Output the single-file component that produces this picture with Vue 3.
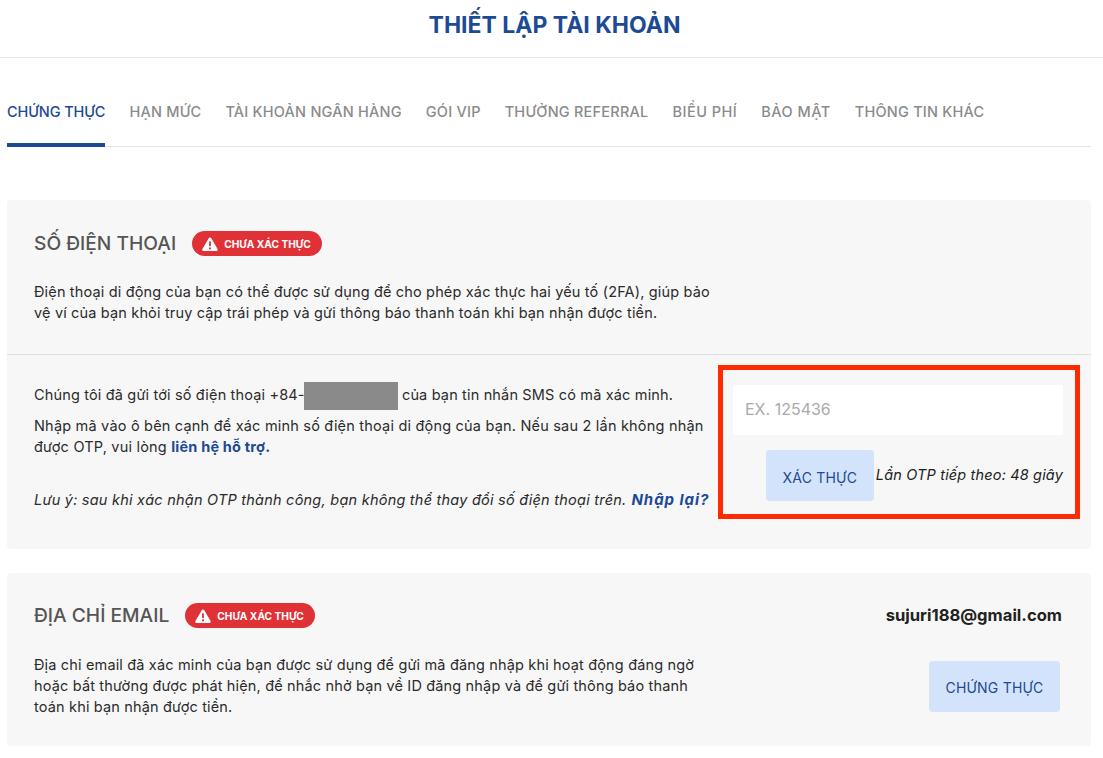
<template>
  <div class="page">
    <header class="top">
      <h1>THIẾT LẬP TÀI KHOẢN</h1>
    </header>

    <nav class="tabs">
      <a
          v-for="(tab, i) in tabs"
          :key="tab"
          class="tab"
          :class="{ active: i === 0 }"
      >{{ tab }}</a>
    </nav>

    <section class="card phone">
      <div class="card-head">
        <div class="title-row">
          <h2>SỐ ĐIỆN THOẠI</h2>
          <span class="badge">
            <svg width="16" height="14" viewBox="0 0 17 15">
              <path d="M8.5 0.5c.5 0 .9.3 1.2.7l6.9 11.7c.5.9-.1 2-1.2 2H1.6c-1.1 0-1.7-1.1-1.2-2L7.3 1.2c.3-.4.7-.7 1.2-.7z" fill="#fff" />
              <rect x="7.5" y="4.5" width="2" height="5.5" rx=".8" fill="#e03236" />
              <circle cx="8.5" cy="12.2" r="1.15" fill="#e03236" />
            </svg>
            CHƯA XÁC THỰC
          </span>
        </div>
        <p class="desc">
          Điện thoại di động của bạn có thể được sử dụng để cho phép xác thực hai yếu tố (2FA), giúp bảo<br>
          vệ ví của bạn khỏi truy cập trái phép và gửi thông báo thanh toán khi bạn nhận được tiền.
        </p>
      </div>

      <div class="verify">
        <div class="verify-text">
          <p class="sent">
            Chúng tôi đã gửi tới số điện thoại +84-<span class="masked"></span> của bạn tin nhắn SMS có mã xác minh.
          </p>
          <p class="enter">
            Nhập mã vào ô bên cạnh để xác minh số điện thoại di động của bạn. Nếu sau 2 lần không nhận<br>
            được OTP, vui lòng <a class="link">liên hệ hỗ trợ.</a>
          </p>
          <p class="note">
            <em>Lưu ý: sau khi xác nhận OTP thành công, bạn không thể thay đổi số điện thoại trên.</em>
            <a class="link again">Nhập lại?</a>
          </p>
        </div>

        <div class="otp-box">
          <input class="otp-input" type="text" placeholder="EX. 125436">
          <div class="otp-actions">
            <button class="btn otp-btn">XÁC THỰC</button>
            <em class="countdown">Lần OTP tiếp theo: {{ seconds }} giây</em>
          </div>
        </div>
      </div>
    </section>

    <section class="card email">
      <div class="email-text">
        <div class="title-row">
          <h2>ĐỊA CHỈ EMAIL</h2>
          <span class="badge">
            <svg width="16" height="14" viewBox="0 0 17 15">
              <path d="M8.5 0.5c.5 0 .9.3 1.2.7l6.9 11.7c.5.9-.1 2-1.2 2H1.6c-1.1 0-1.7-1.1-1.2-2L7.3 1.2c.3-.4.7-.7 1.2-.7z" fill="#fff" />
              <rect x="7.5" y="4.5" width="2" height="5.5" rx=".8" fill="#e03236" />
              <circle cx="8.5" cy="12.2" r="1.15" fill="#e03236" />
            </svg>
            CHƯA XÁC THỰC
          </span>
        </div>
        <p class="desc">
          Địa chỉ email đã xác minh của bạn được sử dụng để gửi mã đăng nhập khi hoạt động đáng ngờ<br>
          hoặc bất thường được phát hiện, để nhắc nhở bạn về ID đăng nhập và để gửi thông báo thanh<br>
          toán khi bạn nhận được tiền.
        </p>
      </div>
      <div class="email-side">
        <strong class="address">sujuri188@gmail.com</strong>
        <button class="btn email-btn">CHỨNG THỰC</button>
      </div>
    </section>
  </div>
</template>

<script setup>
import { ref } from 'vue';

const tabs = [
  'CHỨNG THỰC',
  'HẠN MỨC',
  'TÀI KHOẢN NGÂN HÀNG',
  'GÓI VIP',
  'THƯỞNG REFERRAL',
  'BIỂU PHÍ',
  'BẢO MẬT',
  'THÔNG TIN KHÁC'
];

const seconds = ref(48);
</script>

<style>
html,
body {
  margin: 0;
  background: #fff;
}
</style>

<style scoped>
.page {
  width: 1103px;
  height: 758px;
  overflow: hidden;
  font-family: Inter, "Noto Sans", sans-serif;
  color: #222;
}

.top {
  height: 50px;
  padding: 0 0 7px 6px;
  border-bottom: 1px solid #e3e3e3;
  display: flex;
  justify-content: center;
  align-items: center;
}

.top h1 {
  margin: 0;
  font-size: 23px;
  font-weight: 700;
  color: #1d4a94;
}

.tabs {
  margin: 0 12px 0 7px;
  padding-top: 43px;
  height: 45px;
  display: flex;
  gap: 24px;
  border-bottom: 1px solid #e3e3e3;
}

.tab {
  font-size: 14.5px;
  font-weight: 500;
  letter-spacing: .22px;
  line-height: 22px;
  color: #8b8b8b;
  white-space: nowrap;
}

.tab:nth-child(6),
.tab:nth-child(7) {
  letter-spacing: .5px;
}

.tab.active {
  color: #1d4a94;
  letter-spacing: -.1px;
  height: 46px;
  box-sizing: border-box;
  border-bottom: 4px solid #1d4a94;
}

.card {
  margin: 0 12px 0 7px;
  background: #f7f7f7;
  border-radius: 4px;
}

.phone {
  margin-top: 53px;
  height: 349px;
}

.card-head {
  padding: 31px 28px 0 27px;
  height: 123px;
  border-bottom: 1px solid #e0e0e0;
}

.title-row {
  display: flex;
  align-items: center;
  gap: 16px;
}

h2 {
  margin: 0;
  font-size: 19.2px;
  line-height: 25px;
  font-weight: 500;
  color: #555;
}

.badge {
  display: inline-flex;
  align-items: center;
  gap: 6px;
  height: 25px;
  padding: 0 11px 0 10px;
  border-radius: 13px;
  background: #e03236;
  color: #fff;
  font-size: 10.2px;
  font-weight: 700;
  white-space: nowrap;
}

.desc {
  margin: 25px 0 0;
  font-size: 14.5px;
  letter-spacing: .16px;
  line-height: 21px;
  color: #2b2b2b;
  white-space: nowrap;
}

.verify {
  display: flex;
  padding: 10px 11px 0 27px;
}

.verify-text {
  width: 684px;
  font-size: 14.5px;
  letter-spacing: .16px;
  color: #2b2b2b;
  white-space: nowrap;
}

.verify-text p {
  margin: 0;
  line-height: 21px;
}

.verify-text .sent {
  padding-top: 17px;
}

.masked {
  display: inline-block;
  width: 94px;
  height: 28px;
  margin-left: -1px;
  vertical-align: middle;
  background: #8a8a8a;
}

.verify-text .enter {
  margin-top: 5px;
  letter-spacing: .2px;
}

.verify-text .note {
  margin-top: 32px;
  letter-spacing: .23px;
}

.link {
  color: #1d4a94;
  font-weight: 700;
}

.again {
  margin-left: 5px;
  font-size: 15px;
  font-style: italic;
  letter-spacing: .95px;
}

.otp-box {
  width: 362px;
  height: 154px;
  box-sizing: border-box;
  border: 5px solid #ff2a00;
  padding: 15px 12px 0 10px;
  flex-shrink: 0;
}

.otp-input {
  display: block;
  width: 330px;
  height: 50px;
  box-sizing: border-box;
  border: none;
  border-radius: 2px;
  background: #fff;
  padding: 0 12px 2px;
  font-family: inherit;
  font-size: 16px;
  outline: none;
}

.otp-input::placeholder {
  color: #aaa;
}

.otp-actions {
  margin-top: 15px;
  display: flex;
  align-items: center;
  justify-content: flex-end;
  gap: 2px;
}

.btn {
  border: none;
  border-radius: 4px;
  background: #d3e3fb;
  color: #1d4a94;
  font-family: inherit;
  font-size: 14px;
  letter-spacing: .2px;
  padding: 2px 0 0;
}

.otp-btn {
  width: 108px;
  height: 51px;
  padding-top: 3px;
}

.countdown {
  font-size: 14.5px;
  letter-spacing: .16px;
  color: #222;
  white-space: nowrap;
  padding-bottom: 2px;
}

.email {
  margin-top: 24px;
  height: 173px;
  display: flex;
  justify-content: space-between;
  padding: 30px 29px 0 27px;
  box-sizing: border-box;
}

.email .desc {
  margin-top: 26px;
}

.email-side {
  display: flex;
  flex-direction: column;
  align-items: flex-end;
}

.address {
  font-size: 16.6px;
  font-weight: 700;
  line-height: 25px;
  color: #222;
}

.email-btn {
  margin-top: 33px;
  margin-right: 2px;
  width: 131px;
  height: 51px;
}
</style>
